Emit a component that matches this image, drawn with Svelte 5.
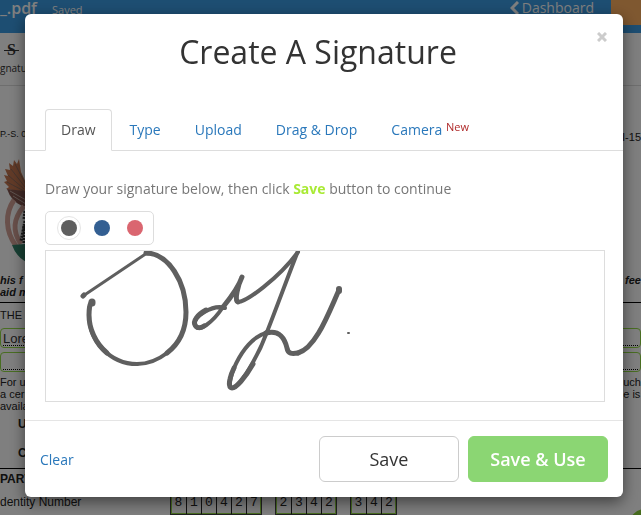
<script>
  let tabs = ['Draw', 'Type', 'Upload', 'Drag & Drop', 'Camera'];
  let activeTab = 'Draw';

  const inks = [
    { name: 'Grey', value: '#5f5f5f' },
    { name: 'Blue', value: '#335f92' },
    { name: 'Red', value: '#da6670' }
  ];
  let ink = '#5f5f5f';

  // each stroke of the signature, with its pen width
  const signature = [
    { d: 'M37 45 L101 2', width: 3 },
    { d: 'M37 45 L38 44 M100 2 L102 2', width: 5 },
    { d: 'M101 2 C122 3 140 30 140 61 C140 77 134 92 121 102', width: 5 },
    { d: 'M121 102 C112 109 101 113 91 113', width: 4 },
    { d: 'M91 113 C64 113 43 90 43 64 Q43 55 45 52', width: 4 },
    { d: 'M61 102 C49 92 43 77 43 64 Q43 55 45 52', width: 5 },
    { d: 'M46 51 L46 52', width: 7 },
    { d: 'M179 57 C167 53 146 66 149 74 C152 83 167 71 177 56', width: 4 },
    { d: 'M160 59 C151 64 147 70 149 74 C151 78 155 77 158 75', width: 5 },
    { d: 'M177 56 C186 45 193 35 196 26 C192 34 188 50 192 51', width: 5 },
    { d: 'M192 51 C200 51 232 28 252 1', width: 4 },
    { d: 'M252 0 C244 20 232 53 221 81', width: 4 },
    { d: 'M221 81 C213 103 194 137 186 137 C178 137 194 89 220 82', width: 4 },
    { d: 'M207 113 C199 127 190 137 186 137 C183 137 183 132 184 128 Q185 123 188 117', width: 5 },
    { d: 'M220 82 C232 79 238 85 241 97 C242 103 246 103 252 102', width: 5 },
    { d: 'M252 102 C270 97 283 61 293 39', width: 5 },
    { d: 'M293 38 L293 40', width: 6 },
    { d: 'M302 82 L303 82', width: 2 }
  ];
  let strokes = signature;

  const numbers = ['810427', '2342', '342'];

  function clearPad() {
    strokes = [];
  }
</script>

<div class="page">
  <header class="topbar">
    <span class="file">_.pdf</span>
    <span class="saved">Saved</span>
    <a class="dashboard" href="#dashboard">
      <svg width="9" height="14" viewBox="0 0 9 14"><path d="M8 1 L2 7 L8 13" fill="none" stroke="currentColor" stroke-width="3" /></svg>
      Dashboard
    </a>
    <span class="done"></span>
  </header>
  <div class="toolbar">
    <s>S</s>
    <small>gnatu</small>
  </div>
  <main class="document">
    <div class="line code"><span>P.-S. 01</span><span>3I-15</span></div>
    <svg class="emblem" width="46" height="110" viewBox="0 0 46 110">
      <path d="M26 34 L6 31 L9 29 L4 24 L7 23 L4 17 L8 18 L5 11 L10 12 L9 5 L13 8 L14 2 L17 6 L19 1 L21 14 L27 27 Z" fill="#c47650" />
      <path d="M24 33 L7 24 M24 31 L8 17 M25 29 L11 11 M26 27 L15 6" fill="none" stroke="#8d6a5c" stroke-width="1" />
      <path d="M7 31 L25 33 L38 39 L34 50 L22 48 Q11 43 7 31 Z" fill="#84564f" />
      <path d="M10 33 L26 42 M13 38 L26 46" fill="none" stroke="#bfa79f" stroke-width="1" />
      <path d="M14 42 C5 55 5 73 16 88 M24 48 C13 61 12 73 21 86" fill="none" stroke="#d3a196" stroke-width="5" />
      <path d="M12 87 Q18 104 36 107 L36 94 Q28 93 25 86 Z" fill="#328269" />
      <path d="M25 53 L24 61 M25 63 L21 83 M24 68 L24 86" fill="none" stroke="#333" stroke-width="3" stroke-dasharray="2 1" />
    </svg>
    <div class="line notice"><span>his f<br />aid m</span><span>fee</span></div>
    <hr />
    <div class="line heading"><span>THE</span></div>
    <div class="field">Lore</div>
    <div class="field"></div>
    <div class="line terms"><span>For u<br />a cer<br />availa</span><span>uch<br />e is</span></div>
    <div class="items"><b>U</b><b>C</b></div>
    <hr />
    <div class="line part"><b>PART</b></div>
    <div class="identity">
      <span>dentity Number</span>
      {#each numbers as number}
        <span class="digits">
          {#each number.split('') as digit}<i>{digit}</i>{/each}
        </span>
      {/each}
    </div>
  </main>
  <span class="bubble"></span>
</div>

<div class="backdrop">
  <div class="modal" role="dialog" aria-modal="true" aria-labelledby="title">
    <div class="modal-header">
      <h1 id="title">Create A Signature</h1>
      <button class="close" aria-label="Close">
        <svg width="10" height="10" viewBox="0 0 10 10"><path d="M1 1 L9 9 M9 1 L1 9" stroke="#ccc" stroke-width="3" /></svg>
      </button>
    </div>

    <nav>
      {#each tabs as tab}
        <a href="#signature" class:active={tab === activeTab} on:click|preventDefault={() => (activeTab = tab)}>
          {tab}{#if tab === 'Camera'}&nbsp;<sup>New</sup>{/if}
        </a>
      {/each}
    </nav>

    <div class="modal-body">
      <p>Draw your signature below, then click <b>Save</b> button to continue</p>
      <fieldset aria-label="Ink colour">
        {#each inks as { name, value }}
          <label>
            <input type="radio" name="ink" aria-label={name} {value} bind:group={ink} />
            <span class="dot" style="background: {value}"></span>
          </label>
        {/each}
      </fieldset>
      <svg class="pad" height="152">
        {#each strokes as stroke}
          <path d={stroke.d} stroke={ink} stroke-width={stroke.width} />
        {/each}
      </svg>
    </div>

    <div class="modal-footer">
      <button class="clear" on:click={clearPad}>Clear</button>
      <button class="btn">Save</button>
      <button class="btn primary">Save &amp; Use</button>
    </div>
  </div>
</div>

<style>
  :global(body) {
    font-family: 'Open Sans', sans-serif;
    font-size: 14px;
    line-height: 20px;
    color: #333;
    overflow: hidden;
  }

  * {
    box-sizing: border-box;
  }

  .page {
    position: relative;
    height: 100vh;
    overflow: hidden;
    background: #fff;
  }

  .topbar {
    display: flex;
    height: 33px;
    background: #3b9ce4;
    color: #fff;
  }
  .file {
    font-size: 16px;
    line-height: 16px;
    font-weight: 600;
    width: 52px;
  }
  .saved {
    font-size: 11px;
  }
  .dashboard {
    display: flex;
    align-items: center;
    gap: 3px;
    height: 16px;
    margin-left: auto;
    margin-right: 17px;
    color: #fff;
    text-decoration: none;
  }
  .done {
    width: 30px;
    height: 25px;
    background: #ffb061;
  }

  .toolbar {
    display: flex;
    flex-direction: column;
    height: 53px;
    padding-top: 6px;
    border-bottom: 1px solid #ddd;
  }
  .toolbar s {
    width: 15px;
    margin-left: 4px;
    font: 16px/22px 'Liberation Serif', serif;
    font-weight: bold;
    text-align: center;
    text-decoration: none;
    background: linear-gradient(#333, #333) center / 100% 1px no-repeat;
  }
  .toolbar small {
    font-size: 10px;
    line-height: 14px;
  }

  .document {
    padding-top: 42px;
    font: 12px/12px 'Liberation Sans', sans-serif;
    color: #222;
  }
  .line {
    display: flex;
    justify-content: space-between;
  }
  .code {
    height: 24px;
    font-size: 9px;
  }
  .code span:last-child {
    font-size: 11px;
    line-height: 18px;
  }
  .emblem {
    display: block;
    height: 122px;
  }
  .notice {
    height: 28px;
    font-size: 11px;
    font-weight: bold;
    font-style: italic;
  }
  hr {
    margin: 0;
    border: 0;
    border-top: 1px solid #000;
  }
  .heading {
    padding: 6px 0 7px;
    font-size: 11px;
  }
  .field {
    height: 20px;
    margin-bottom: 4px;
    padding: 4px 2px;
    font-size: 13px;
    border: 1px solid #93dc45;
    border-radius: 4px;
    color: #333;
  }
  .field::after {
    content: '';
    display: block;
    border-bottom: 1px dotted #000;
  }
  .field:empty::after {
    margin-top: 12px;
  }
  .terms {
    height: 42px;
    font-size: 11px;
  }
  .items {
    display: flex;
    flex-direction: column;
    gap: 17px;
    height: 50px;
    padding-left: 18px;
  }
  .part {
    padding: 4px 0 6px;
  }
  .identity {
    display: flex;
    gap: 13px;
    line-height: 22px;
  }
  .identity > span:first-child {
    width: 157px;
  }
  .digits {
    display: flex;
    height: 24px;
    border: 1px solid #444;
    box-shadow: inset 0 0 0 1px #93dc45;
    font: 13px/22px 'Liberation Mono', monospace;
  }
  .digits i {
    width: 15px;
    font-style: normal;
    text-align: center;
  }
  .digits i + i {
    border-left: 1px solid #222;
  }
  /* chat bubble peeking in from the corner */
  .bubble {
    position: absolute;
    right: -20px;
    bottom: -26px;
    width: 32px;
    height: 32px;
    border-radius: 50%;
    background: #8cd63a;
  }

  .backdrop {
    position: fixed;
    inset: 0;
    padding: 14px 18px 18px 25px;
    background: rgba(0, 0, 0, 0.5);
  }
  .modal {
    background: #fff;
    border-radius: 6px;
    box-shadow: 0 5px 15px rgba(0, 0, 0, 0.5);
  }
  .modal-header {
    display: flex;
    align-items: flex-start;
    height: 95px;
    padding: 15px;
  }
  h1 {
    flex: 1;
    margin: 0;
    font-size: 32px;
    line-height: 46px;
    font-weight: 400;
    text-align: center;
  }
  button {
    font-family: inherit;
    cursor: pointer;
  }
  .close {
    display: flex;
    padding: 3px 1px;
    border: 0;
    background: none;
  }

  nav {
    display: flex;
    gap: 2px;
    padding: 0 20px;
    border-bottom: 1px solid #ddd;
  }
  nav a {
    height: 42px;
    margin-bottom: -1px;
    padding: 10px 15px;
    border: 1px solid transparent;
    border-radius: 4px 4px 0 0;
    color: #2a78bb;
    text-decoration: none;
  }
  nav a.active {
    border-color: #ddd;
    border-bottom-color: #fff;
    background: #fff;
    color: #555;
  }
  sup {
    font-size: 11px;
    line-height: 0;
    vertical-align: 4px;
    color: #b02a2a;
  }

  .modal-body {
    padding: 28px 18px 18px 20px;
  }
  p {
    margin: 0 0 12px;
    color: #777;
  }
  p b {
    color: #a9ea35;
  }
  fieldset {
    display: flex;
    gap: 9px;
    width: max-content;
    height: 34px;
    margin: 0 0 5px;
    padding: 4px 6px 4px 11px;
    border: 1px solid #ddd;
    border-radius: 5px;
  }
  label {
    display: grid;
    place-items: center;
    width: 24px;
    height: 24px;
  }
  label > * {
    grid-area: 1 / 1;
  }
  input {
    appearance: none;
    width: 24px;
    height: 24px;
    margin: 0;
    border-radius: 50%;
  }
  input:checked {
    border: 1px solid #e5e5e5;
  }
  .dot {
    width: 16px;
    height: 16px;
    border-radius: 50%;
  }
  .pad {
    display: block;
    width: 100%;
    border: 1px solid #ddd;
    fill: none;
    stroke-linecap: round;
    stroke-linejoin: round;
  }

  .modal-footer {
    display: flex;
    align-items: center;
    gap: 9px;
    padding: 15px;
    border-top: 1px solid #e5e5e5;
  }
  .clear {
    margin-right: auto;
    padding: 0;
    border: 0;
    background: none;
    font-size: 14px;
    color: #2a78bb;
  }
  .btn {
    width: 140px;
    height: 46px;
    border: 1px solid #ccc;
    border-radius: 6px;
    background: #fff;
    font-size: 18px;
    color: #333;
  }
  .primary {
    border-color: #8bd673;
    background: #8bd673;
    font-weight: 600;
    color: #fff;
  }
</style>
